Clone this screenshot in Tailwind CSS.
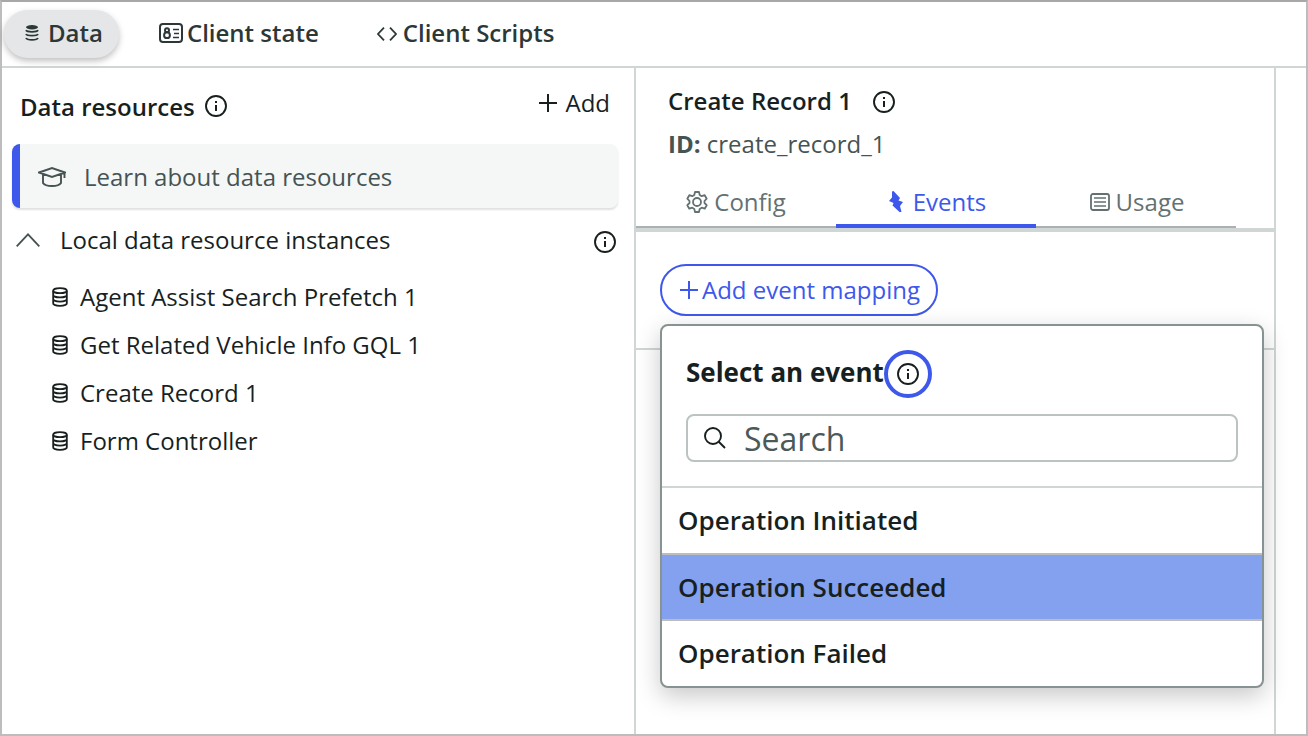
<!DOCTYPE html>
<html lang="en">
<head>
<meta charset="utf-8">
<meta name="viewport" content="width=device-width, initial-scale=1">
<title>Data resources</title>
<script src="https://cdn.jsdelivr.net/npm/@tailwindcss/browser@4"></script>
</head>
<body class="bg-white font-['Open_Sans','Noto_Sans',sans-serif] text-2xl text-[#181f1f]">
<svg class="hidden" aria-hidden="true">
  <symbol id="info" viewBox="0 0 24 24"><circle cx="12" cy="12" r="10" fill="none" stroke="currentColor" stroke-width="1.900"/><path d="M11 7h2v2h-2zM11 11h2v6h-2z" fill="currentColor"/></symbol>
  <symbol id="db" viewBox="0 0 18 22"><g fill="none" stroke="currentColor" stroke-width="2"><ellipse cx="9" cy="4" rx="7.5" ry="2.8"/><path d="M1.5 4v14c0 1.500 3.300 2.800 7.500 2.800s7.500-1.300 7.500-2.800V4M1.500 8.700c0 1.500 3.300 2.800 7.500 2.800s7.500-1.300 7.500-2.800M1.500 13.300c0 1.500 3.300 2.800 7.500 2.800s7.500-1.300 7.500-2.800"/></g></symbol>
  <symbol id="plus" viewBox="0 0 18 18"><path d="M9 0v18M0 9h18" fill="none" stroke="currentColor" stroke-width="2"/></symbol>
</svg>
<div class="flex min-h-screen flex-col border-2 border-[#bdbdbd] border-t-[#a8a8a8]">
  <nav class="flex h-[66px] items-center gap-10 border-b-2 border-[#d0d6d6] pl-0.5 font-semibold text-[#2c3838]">
    <button class="flex h-12 items-center gap-[9px] rounded-full bg-[#e4e6e7] pb-0.5 pl-[21px] pr-4 shadow-[0_3px_6px_rgba(0,0,0,0.25)]">
      <svg class="h-4 w-[14px]" viewBox="0 0 14 16"><ellipse cx="7" cy="2.200" rx="6" ry="2.200" fill="currentColor"/><path d="M1 5.200c1 2.200 11 2.200 12 0M1 9c1 2.200 11 2.200 12 0M1 13c1 2.400 11 2.400 12 0" fill="none" stroke="currentColor" stroke-width="1.800"/></svg>
      Data</button>
    <button class="flex h-12 items-center gap-1 pb-0.5">
      <svg class="h-5 w-6" viewBox="0 0 24 20"><g fill="none" stroke="currentColor" stroke-width="2"><rect x="1" y="1" width="22" height="18" rx="3"/><circle cx="8" cy="7.200" r="2"/><circle cx="8" cy="12.200" r="2.900"/><path d="M14 6.500h6M15 10.500h5M14 14.500h6" stroke-width="1.600"/></g></svg>
      Client state</button>
    <button class="ml-[18px] flex h-12 items-center gap-[6px] pb-0.5">
      <svg class="mt-0.5 h-[14px] w-5" viewBox="0 0 20 14"><path d="M7 .7L1 7l6 6.300M13 .7L19 7l-6 6.300" fill="none" stroke="currentColor" stroke-width="1.800"/></svg>
      Client Scripts</button>
  </nav>
  <div class="flex flex-1">
    <aside class="min-w-0 flex-1">
      <div class="flex h-[76px] items-center justify-between pl-[18px] pr-6">
        <h2 class="flex items-center gap-[9px] font-semibold"><span class="pt-0.5">Data resources</span>
          <button aria-label="About data resources"><svg class="size-6"><use href="#info"/></svg></button></h2>
        <button class="mb-[6px] flex items-center gap-2"><svg class="size-[18px]"><use href="#plus"/></svg>Add</button>
      </div>
      <a href="#" class="ml-[10px] mr-4 flex h-16 items-center gap-[18px] rounded-lg border-l-8 border-[#3d58eb] bg-[#f5f7f7] pl-[18px] pt-0.5 text-[#465353] shadow-[0_2px_2px_rgba(0,0,0,0.12)]">
        <svg class="h-5 w-7" viewBox="0 0 28 20"><path d="M1 5.500L14 1l13 4.500L14 10zM5 7.500V16c2.500 4 15.500 4 18 0V7.500M26.500 5.500V11" fill="none" stroke="currentColor" stroke-width="1.900"/></svg>
        Learn about data resources</a>
      <div class="flex h-16 items-center pl-[14px] pr-[17px]">
        <button class="mr-5 flex items-center gap-5"><svg class="h-[14px] w-6 text-[#465353]" viewBox="0 0 24 14"><path d="M.7 13.300L12 1.300l11.300 12" fill="none" stroke="currentColor" stroke-width="1.800"/></svg>Local data resource instances</button>
        <button class="ml-auto mt-1" aria-label="About local instances"><svg class="size-6"><use href="#info"/></svg></button>
      </div>
      <ul class="pt-px">
        <li><button class="flex h-12 items-center gap-[11px] pl-[49px]"><svg class="h-5 w-[18px]"><use href="#db"/></svg>Agent Assist Search Prefetch 1</button></li>
        <li><button class="flex h-12 items-center gap-[11px] pl-[49px]"><svg class="h-5 w-[18px]"><use href="#db"/></svg>Get Related Vehicle Info GQL 1</button></li>
        <li><button class="flex h-12 items-center gap-[11px] pl-[49px]"><svg class="h-5 w-[18px]"><use href="#db"/></svg>Create Record 1</button></li>
        <li><button class="flex h-12 items-center gap-[11px] pl-[49px]"><svg class="h-5 w-[18px]"><use href="#db"/></svg>Form Controller</button></li>
      </ul>
    </aside>
    <main class="mr-[30px] w-[642px] border-x-2 border-[#d0d6d6]">
      <div class="flex h-[110px] flex-col pl-8 pt-[15px]">
        <h2 class="flex items-center gap-5 font-semibold leading-9">Create Record 1
          <button class="pt-0.5" aria-label="About this record"><svg class="size-6"><use href="#info"/></svg></button></h2>
        <p class="mt-[7px] leading-9 text-[#465353]"><b>ID:</b> create_record_1</p>
      </div>
      <div class="flex border-b-4 border-[#d0d6d6] text-[#647171]" role="tablist">
        <button role="tab" class="flex h-[50px] w-[200px] items-center justify-center gap-[6px] border-b-2 border-[#a9b1b3]">
          <svg class="size-[22px]" viewBox="0 0 22 22"><g fill="none" stroke="currentColor" stroke-width="1.800" stroke-linejoin="round"><path d="M9 1h4l.7 3 2 1.200 3-1 2 3.500L18.500 10v2l2.200 2.200-2 3.500-3-1-2 1.200L13 21H9l-.7-3.100-2-1.200-3 1-2-3.500L3.500 12v-2L1.300 7.700l2-3.500 3 1 2-1.200z"/><circle cx="11" cy="11" r="4"/></g></svg>
          Config</button>
        <button role="tab" aria-selected="true" class="flex h-[50px] w-[200px] items-center justify-center gap-[10px] border-b-4 border-[#3d58eb] pl-[3px] pt-0.5 text-[#3d58eb]">
          <svg class="h-[22px] w-[14px]" viewBox="0 0 14 22"><path d="M3 .5L4.500 0l6.500 7-1.500 2.500 4.500 1.500-3 4 1.500 6h-2L3.500 14.500 4.500 12 0 10l3-3.500z" fill="currentColor"/></svg>
          Events</button>
        <button role="tab" class="flex h-[50px] w-[200px] items-center justify-center gap-[6px] border-b-2 border-[#a9b1b3] pl-0.5">
          <svg class="h-[18px] w-5" viewBox="0 0 20 18"><g fill="none" stroke="currentColor" stroke-width="1.800"><rect x="1" y="1" width="18" height="16" rx="2"/><path d="M4 5h12M4 9h12M4 13h12" stroke-width="1.600"/></g></svg>
          Usage</button>
      </div>
      <div class="border-b-2 border-[#d0d6d6] px-6 pb-8 pt-8">
        <div class="relative -mr-[14px] flex">
          <button class="flex h-[52px] items-center gap-1 rounded-full border-2 border-[#3d58eb] px-4 pl-[18px] text-[#3d58eb]"><svg class="size-[18px]"><use href="#plus"/></svg>Add event mapping</button>
          <section class="absolute left-0 right-0 top-[60px] overflow-hidden rounded-lg border-2 border-[#879292] bg-white shadow-[0_8px_24px_rgba(0,0,0,0.22)]">
            <div class="border-b-2 border-[#d0d6d6] px-6 pb-6 pt-6">
              <div class="flex h-12 items-center text-[26px] font-bold"><span class="pb-1">Select an event</span>
                <button class="flex size-12 items-center justify-center rounded-full border-4 border-[#3d58eb]" aria-label="About events"><svg class="size-6"><use href="#info"/></svg></button></div>
              <label class="mt-4 flex h-12 items-center gap-[18px] rounded-lg border-2 border-[#bcc3c3] px-4">
                <svg class="size-[22px] shrink-0" viewBox="0 0 22 22"><path d="M14.500 14.500L21 21M17 9A8 8 0 1 1 1 9a8 8 0 0 1 16 0z" fill="none" stroke="currentColor" stroke-width="1.900"/></svg>
                <input type="search" placeholder="Search" aria-label="Search" class="h-11 min-w-0 flex-1 text-[32px] outline-none placeholder:text-[#4b5959]">
              </label>
            </div>
            <ul class="divide-y-2 divide-[#bdbdbd] text-[26px] font-semibold">
              <li><button class="block h-[65px] w-full px-4 text-left">Operation Initiated</button></li>
              <li><button class="block h-16 w-full bg-[#84a1f0] px-4 text-left">Operation Succeeded</button></li>
              <li><button class="block h-[65px] w-full px-4 text-left">Operation Failed</button></li>
            </ul>
          </section>
        </div>
      </div>
    </main>
  </div>
</div>
</body>
</html>
